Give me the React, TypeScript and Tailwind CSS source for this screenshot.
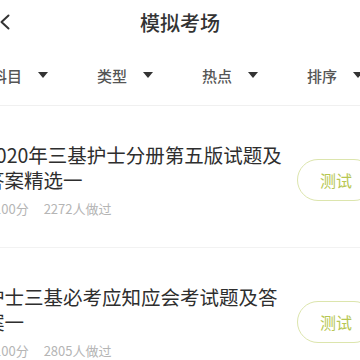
import React from "react";

const font = { fontFamily: '"Noto Sans CJK SC", "Noto Sans", sans-serif' };

function Tri() {
  return (
    <svg width="10" height="6" viewBox="0 0 10 6" className="shrink-0">
      <path d="M0 0 L10 0 L5 6 Z" fill="#333" />
    </svg>
  );
}

const filters = ["科目", "类型", "热点", "排序"];

const items = [
  { title: "2020年三基护士分册第五版试题及答案精选一", score: "100分", count: "2272人做过" },
  { title: "护士三基必考应知应会考试题及答案一", score: "100分", count: "2805人做过" },
];

export default function App() {
  return (
    <div className="w-[360px] h-[360px] overflow-hidden bg-white" style={font}>
      <div className="relative h-[45px] flex items-center justify-center">
        <svg
          className="absolute left-0 top-[14px]"
          width="10"
          height="16"
          viewBox="0 0 10 16"
        >
          <path d="M8.5 1.5 L1.5 8 L8.5 14.5" fill="none" stroke="#333" strokeWidth="2" strokeLinecap="round" strokeLinejoin="round" />
        </svg>
        <span className="text-[20px] font-medium text-[#333] leading-none">模拟考场</span>
      </div>
      <div className="h-[61px] flex items-center ml-[-8px] border-b border-[#f0f0f0]">
        {filters.map((f) => (
          <div key={f} className="w-[105px] shrink-0 flex items-center gap-[16px]">
            <span className="text-[15px] text-[#555] font-medium leading-none">{f}</span>
            <Tri />
          </div>
        ))}
      </div>
      {items.map((it, i) => (
        <div
          key={i}
          className="flex items-center ml-[-15px] pt-[36px] pb-[29px] border-b border-[#f2f2f2]"
        >
          <div className="w-[308px] shrink-0">
            <div className="text-[19.5px] leading-[25px] text-[#2e2e2e]">{it.title}</div>
            <div className="mt-[8px] ml-[9px] flex gap-[15px] text-[13px] leading-[18px] text-[#b5b5b5]">
              <span>{it.score}</span>
              <span>{it.count}</span>
            </div>
          </div>
          <div className="ml-[4px] shrink-0 w-[78px] h-[42px] rounded-full border-[1.5px] border-[#dce5ad] flex items-center justify-center">
            <span className="text-[16px] text-[#b7c752] leading-none">测试</span>
          </div>
        </div>
      ))}
    </div>
  );
}
